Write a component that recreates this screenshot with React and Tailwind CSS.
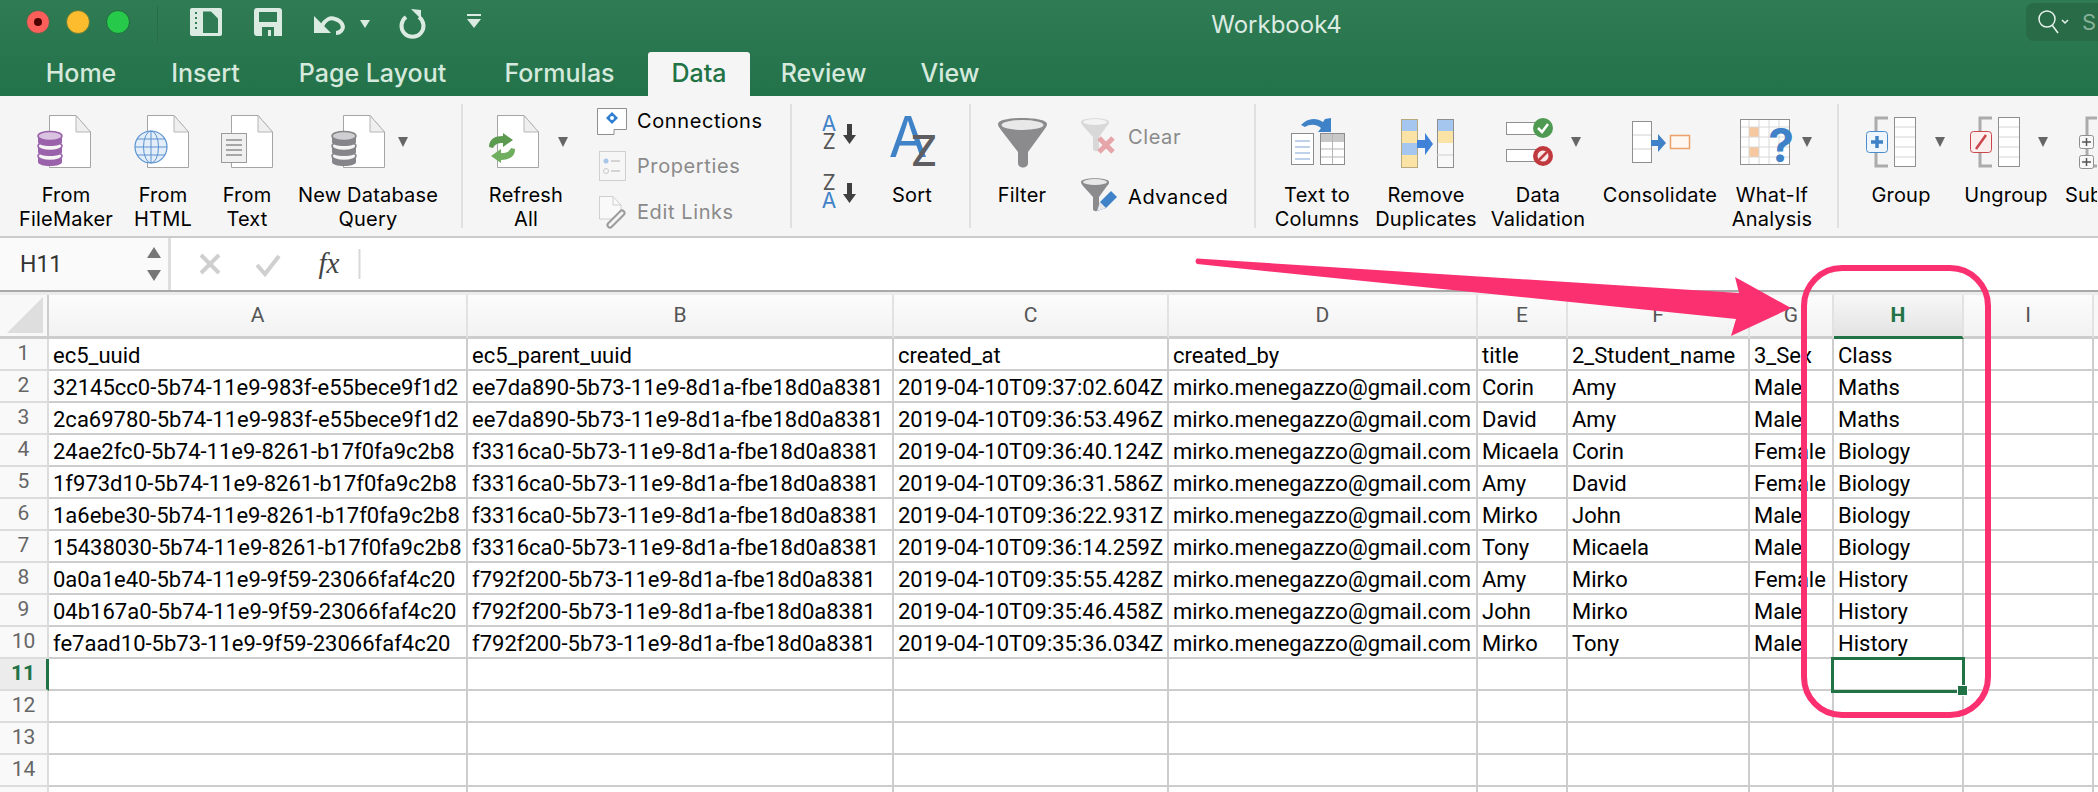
const rows = [
  ['ec5_uuid', 'ec5_parent_uuid', 'created_at', 'created_by', 'title', '2_Student_name', '3_Sex', 'Class'],
  ['32145cc0-5b74-11e9-983f-e55bece9f1d2', 'ee7da890-5b73-11e9-8d1a-fbe18d0a8381', '2019-04-10T09:37:02.604Z', 'mirko.menegazzo@gmail.com', 'Corin', 'Amy', 'Male', 'Maths'],
  ['2ca69780-5b74-11e9-983f-e55bece9f1d2', 'ee7da890-5b73-11e9-8d1a-fbe18d0a8381', '2019-04-10T09:36:53.496Z', 'mirko.menegazzo@gmail.com', 'David', 'Amy', 'Male', 'Maths'],
  ['24ae2fc0-5b74-11e9-8261-b17f0fa9c2b8', 'f3316ca0-5b73-11e9-8d1a-fbe18d0a8381', '2019-04-10T09:36:40.124Z', 'mirko.menegazzo@gmail.com', 'Micaela', 'Corin', 'Female', 'Biology'],
  ['1f973d10-5b74-11e9-8261-b17f0fa9c2b8', 'f3316ca0-5b73-11e9-8d1a-fbe18d0a8381', '2019-04-10T09:36:31.586Z', 'mirko.menegazzo@gmail.com', 'Amy', 'David', 'Female', 'Biology'],
  ['1a6ebe30-5b74-11e9-8261-b17f0fa9c2b8', 'f3316ca0-5b73-11e9-8d1a-fbe18d0a8381', '2019-04-10T09:36:22.931Z', 'mirko.menegazzo@gmail.com', 'Mirko', 'John', 'Male', 'Biology'],
  ['15438030-5b74-11e9-8261-b17f0fa9c2b8', 'f3316ca0-5b73-11e9-8d1a-fbe18d0a8381', '2019-04-10T09:36:14.259Z', 'mirko.menegazzo@gmail.com', 'Tony', 'Micaela', 'Male', 'Biology'],
  ['0a0a1e40-5b74-11e9-9f59-23066faf4c20', 'f792f200-5b73-11e9-8d1a-fbe18d0a8381', '2019-04-10T09:35:55.428Z', 'mirko.menegazzo@gmail.com', 'Amy', 'Mirko', 'Female', 'History'],
  ['04b167a0-5b74-11e9-9f59-23066faf4c20', 'f792f200-5b73-11e9-8d1a-fbe18d0a8381', '2019-04-10T09:35:46.458Z', 'mirko.menegazzo@gmail.com', 'John', 'Mirko', 'Male', 'History'],
  ['fe7aad10-5b73-11e9-9f59-23066faf4c20', 'f792f200-5b73-11e9-8d1a-fbe18d0a8381', '2019-04-10T09:35:36.034Z', 'mirko.menegazzo@gmail.com', 'Mirko', 'Tony', 'Male', 'History'],
]
const columns = ['A', 'B', 'C', 'D', 'E', 'F', 'G', 'H', 'I']
const tabs = [
  ['Home', 'w-[114px] ml-[24px]'],
  ['Insert', 'w-[113px] ml-[11px]'],
  ['Page Layout', 'w-[193px] ml-[14px]'],
  ['Formulas', 'w-[155px] ml-[13px]'],
  ['Data', 'w-[102px] ml-[11px]'],
  ['Review', 'w-[129px] ml-[9px]'],
  ['View', 'w-[100px] ml-[12px]'],
]

function Drop({ x, y = 142 }) {
  return <path d={`M${x - 5} ${y - 5}h10l-5 10z`} fill="#666" />
}

function Page({ x }) {
  return (
    <g>
      <path d={`M${x + .5} 115.5H${x + 27}L${x + 41.5} 132V167.5H${x + .5}Z`} fill="#fff" stroke="#a5a5a5" />
      <path d={`M${x + 27} 115.5V132H${x + 41.5}Z`} fill="#efefef" stroke="#b5b5b5" />
    </g>
  )
}

function Db({ x, color, light }) {
  const w = 24
  return (
    <g>
      {[153, 143, 133].map((y, i) => (
        <g key={y}>
          <path d={`M${x} ${y + 3}v6c0 2.500 5.400 4 12 4s12-1.500 12-4v-6z`} fill={color} />
          <ellipse cx={x + w / 2} cy={y + 3} rx={12} ry={4.500} fill={i === 2 ? light : '#f5f5f5'} stroke={color} strokeWidth="1.500" />
        </g>
      ))}
    </g>
  )
}

function Tool({ x, w, className, lines, children }) {
  return (
    <div className={`flex flex-col items-center shrink-0 ${className}`}>
      <svg width={w} height={68} viewBox={`${x} 108 ${w} 68`} className="overflow-visible shrink-0">{children}</svg>
      <div className="mt-[7px] text-[20px] leading-[24px] text-center whitespace-nowrap text-black tracking-[.01em]">
        {lines.map(l => <div key={l}>{l}</div>)}
      </div>
    </div>
  )
}

function Divider() {
  return <div className="w-[2px] h-[124px] mt-[8px] bg-[#e0e0e0] shrink-0" />
}

function SmallRow({ icon, text, muted }) {
  return (
    <div className="h-[45.5px] flex items-center">
      <svg width="40" height="34" viewBox="0 0 40 34" className="shrink-0">{icon}</svg>
      <span className={`text-[20px] tracking-[.03em] whitespace-nowrap ${muted ? 'text-[#8a8a8a]' : 'text-black'}`}>{text}</span>
    </div>
  )
}

function Ribbon() {
  return (
    <div className="flex h-[140px] bg-[#f5f5f5] font-[Inter,sans-serif] overflow-hidden">
      <div className="flex pt-[12px] pl-[12px] shrink-0 w-[461px]">
        <Tool x={12} w={108} className="w-[108px]" lines={['From', 'FileMaker']}>
          <Page x={49} />
          <Db x={38} color="#9a62ab" light="#d9c3e0" />
        </Tool>
        <Tool x={120} w={86} className="w-[86px]" lines={['From', 'HTML']}>
          <Page x={147} />
          <circle cx="151" cy="147" r="16" fill="#e3eefa" stroke="#5c93cf" strokeWidth="1.200" />
          <ellipse cx="151" cy="147" rx="7.500" ry="16" fill="none" stroke="#5c93cf" />
          <path d="M135 147h32M137 139h28M137 155h28M151 131v32" stroke="#5c93cf" fill="none" />
        </Tool>
        <Tool x={206} w={82} className="w-[82px]" lines={['From', 'Text']}>
          <Page x={231} />
          <rect x="221.500" y="133.500" width="25" height="29" fill="#f0f0f0" stroke="#9a9a9a" />
          <path d="M226 140h16M226 145h16M226 150h16M226 155h16" stroke="#8d8d8d" strokeWidth="1.500" />
        </Tool>
        <Tool x={288} w={160} className="w-[160px]" lines={['New Database', 'Query']}>
          <Page x={343} />
          <Db x={332} color="#86868a" light="#cfcfd2" />
          <Drop x={403} />
        </Tool>
      </div>
      <Divider />
      <div className="flex pt-[12px] shrink-0 w-[126px]">
        <Tool x={463} w={126} className="w-[126px]" lines={['Refresh', 'All']}>
          <Page x={497} />
          <path d="M489 147c0-8 6-11 14-11v-3l10 7-10 7v-4c-5 0-8 1-10 5z" fill="#5b9a4f" />
          <path d="M515 149c0 8-6 11-14 11v3l-10-7 10-7v4c5 0 8-1 10-5z" fill="#6fae5f" />
          <Drop x={563} />
        </Tool>
      </div>
      <div className="flex flex-col pt-[2px] pl-[8px] w-[201px] shrink-0">
        <SmallRow
          text="Connections"
          icon={
            <g>
              <path d="M.5 4.500H29.500V25.500H17V30.500H.5Z" fill="#fff" stroke="#8f8f8f" />
              <path d="M15 8l6 6-6 6-6-6z" fill="#2f7fd0" />
              <circle cx="15" cy="14" r="2" fill="#fff" />
            </g>
          }
        />
        <SmallRow
          text="Properties"
          muted
          icon={
            <g>
              <rect x="2.500" y="2.500" width="26" height="29" fill="#f6f6f6" stroke="#cfcfcf" />
              <circle cx="9" cy="12" r="2.500" fill="#a8c6e8" />
              <circle cx="9" cy="22" r="2.500" fill="none" stroke="#c8c8c8" />
              <path d="M14 12h9M14 22h9" stroke="#c8c8c8" strokeWidth="1.500" />
            </g>
          }
        />
        <SmallRow
          text="Edit Links"
          muted
          icon={
            <g>
              <path d="M2.500 1.500H16L24 10V24H2.500Z" fill="#f9f9f9" stroke="#cfcfcf" />
              <path d="M16 1.500V10H24" fill="none" stroke="#cfcfcf" />
              <path d="M13 30l12-12" stroke="#9c9c9c" strokeWidth="7" strokeLinecap="round" fill="none" />
              <path d="M13 30l12-12" stroke="#f5f5f5" strokeWidth="3" strokeLinecap="round" fill="none" />
            </g>
          }
        />
      </div>
      <Divider />
      <div className="flex shrink-0">
        <svg width="92" height="134" viewBox="793 100 92 134" className="shrink-0">
          <text x="830" y="135" textAnchor="middle" fontSize="21" fontFamily="Inter" fill="#3f82c8">A</text>
          <text x="830" y="153" textAnchor="middle" fontSize="21" fontFamily="Inter" fill="#555">Z</text>
          <path d="M848 128h5v11h4l-6.500 9-6.500-9h4z" fill="#404040" />
          <text x="830" y="194" textAnchor="middle" fontSize="21" fontFamily="Inter" fill="#555">Z</text>
          <text x="830" y="212" textAnchor="middle" fontSize="21" fontFamily="Inter" fill="#3f82c8">A</text>
          <path d="M848 187h5v11h4l-6.500 9-6.500-9h4z" fill="#404040" />
        </svg>
        <div className="pt-[12px]">
          <Tool x={885} w={56} className="w-[56px]" lines={['Sort']}>
            <text x="909" y="157" textAnchor="middle" fontSize="56" fontFamily="Inter" fill="#3f82c8">A</text>
            <text x="925" y="166" textAnchor="middle" fontSize="42" fontWeight="500" fontFamily="Inter" fill="#5e5e62">Z</text>
          </Tool>
        </div>
        <div className="w-[29px]" />
      </div>
      <Divider />
      <div className="flex pt-[12px] shrink-0 w-[102px]">
        <Tool x={972} w={102} className="w-[102px]" lines={['Filter']}>
          <path d="M999 124c0-8 49-8 49 0 0 2-1 3-3 6l-16 22v11c0 6-10 6-10 0v-11l-17-22c-2-3-3-4-3-6z" fill="#8b8b8d" />
          <ellipse cx="1023.500" cy="125" rx="21" ry="5" fill="#e8e8e8" />
        </Tool>
      </div>
      <div className="flex flex-col pt-[11px] pl-[4px] w-[181px] shrink-0">
        <div className="h-[60px] flex items-center">
          <svg width="46" height="40" viewBox="0 0 46 40" className="shrink-0">
            <path d="M4 5c0-5 28-5 28 0 0 1 0 2-2 4l-8 11v12c0 3-6 3-6 0V20L6 9C5 8 4 6 4 5z" fill="#d8d8d8" />
            <ellipse cx="18" cy="5" rx="12" ry="3" fill="#f3f3f3" />
            <path d="M22 21l14 14M36 21L22 35" stroke="#e6a5a8" strokeWidth="5" />
          </svg>
          <span className="ml-[5px] text-[20px] tracking-[.03em] text-[#8a8a8a]">Clear</span>
        </div>
        <div className="h-[60px] flex items-center">
          <svg width="46" height="40" viewBox="0 0 46 40" className="shrink-0">
            <path d="M4 5c0-5 28-5 28 0 0 1 0 2-2 4l-8 11v12c0 3-6 3-6 0V20L6 9C5 8 4 6 4 5z" fill="#8b8b8d" />
            <ellipse cx="18" cy="5" rx="12" ry="3" fill="#e8e8e8" />
            <path d="M20 34l3-9 11-11 6 6-11 11z" fill="#3f82c8" />
            <path d="M20 34l3-9 6 6z" fill="#e9e9e9" />
          </svg>
          <span className="ml-[5px] text-[20px] tracking-[.03em] text-black whitespace-nowrap">Advanced</span>
        </div>
      </div>
      <Divider />
      <div className="flex pt-[12px] shrink-0 w-[581px]">
        <Tool x={1257} w={122} className="w-[122px]" lines={['Text to', 'Columns']}>
          <path d="M1302 125c6-7 15-8 22-3l2-3 6-1v14h-13l3-4c-5-4-11-4-16-1z" fill="#3f82c8" />
          <rect x="1292.500" y="133.500" width="22" height="31" fill="#fff" stroke="#8c8c8c" />
          <path d="M1296 141h15M1296 147h15M1296 153h15M1296 159h15" stroke="#a9c5e4" strokeWidth="1.500" />
          <rect x="1321.500" y="133.500" width="24" height="31" fill="#fff" stroke="#8c8c8c" />
          <rect x="1322" y="134" width="23" height="8" fill="#c8c8c8" />
          <path d="M1333.500 134v30M1322 149h23M1322 157h23" stroke="#b5b5b5" />
        </Tool>
        <Tool x={1379} w={96} className="w-[96px]" lines={['Remove', 'Duplicates']}>
          <rect x="1402" y="119" width="16" height="12" fill="#a5c6ee" />
          <rect x="1402" y="131" width="16" height="12" fill="#fbe3a5" />
          <rect x="1402" y="143" width="16" height="12" fill="#a5c6ee" />
          <rect x="1402" y="155" width="16" height="12" fill="#fbe3a5" />
          <rect x="1402.500" y="119.500" width="16" height="48" fill="none" stroke="#b6a97e" />
          <path d="M1418 140h8v-7l8 11-8 11v-7h-8z" fill="#3f82d8" />
          <rect x="1438" y="119" width="16" height="12" fill="#a5c6ee" />
          <rect x="1438" y="131" width="16" height="12" fill="#fbe3a5" />
          <rect x="1438" y="143" width="16" height="24" fill="#f8f8f8" />
          <rect x="1438.500" y="119.500" width="16" height="48" fill="none" stroke="#8f8f8f" />
          <path d="M1438 155h16" stroke="#cfcfcf" />
        </Tool>
        <Tool x={1475} w={128} className="w-[128px]" lines={['Data', 'Validation']}>
          <rect x="1507.500" y="122.500" width="34" height="12" fill="#fff" stroke="#8f8f8f" />
          <circle cx="1544" cy="128" r="10" fill="#4f9a52" />
          <path d="M1539 128l4 4 6-8" stroke="#fff" strokeWidth="2.500" fill="none" />
          <rect x="1507.500" y="149.500" width="34" height="12" fill="#fff" stroke="#8f8f8f" />
          <circle cx="1544" cy="156" r="10" fill="#c0393f" />
          <circle cx="1544" cy="156" r="5.500" fill="#f8e8e8" />
          <path d="M1540 160l8-8" stroke="#c0393f" strokeWidth="2.500" />
          <Drop x={1577} />
        </Tool>
        <Tool x={1603} w={116} className="w-[116px]" lines={['Consolidate']}>
          <rect x="1633.500" y="121.500" width="19" height="41" fill="#fff" stroke="#8f8f8f" />
          <path d="M1634 135h18M1634 149h18" stroke="#d0d0d0" />
          <path d="M1652 140h7v-6l8 9-8 9v-6h-7z" fill="#3f82c8" />
          <rect x="1671.500" y="135.500" width="19" height="13" fill="#fff8f0" stroke="#eaa26a" strokeWidth="1.500" />
        </Tool>
        <Tool x={1719} w={108} className="w-[108px]" lines={['What-If', 'Analysis']}>
          <rect x="1741.500" y="119.500" width="49" height="45" fill="#fff" stroke="#8f8f8f" />
          <rect x="1750" y="127" width="10" height="10" fill="#f6c8a0" />
          <rect x="1750" y="147" width="10" height="10" fill="#f6c8a0" />
          <path d="M1750 120v44M1760 120v44M1770 120v44M1780 120v44M1742 127h48M1742 137h48M1742 147h48M1742 157h48" stroke="#d8d8d8" fill="none" />
          <text x="1782" y="162" textAnchor="middle" fontSize="46" fontWeight="700" fontFamily="Inter" fill="#3f82c8">?</text>
          <Drop x={1808} />
        </Tool>
        <div className="w-[7px]" />
      </div>
      <Divider />
      <div className="flex pt-[12px] shrink-0">
        <Tool x={1840} w={124} className="w-[124px]" lines={['Group']}>
          <path d="M1889 118h-12v48h12" fill="none" stroke="#ababab" strokeWidth="3" />
          <rect x="1895.500" y="117.500" width="21" height="49" fill="#fff" stroke="#8f8f8f" />
          <path d="M1896 127h20M1896 137h20M1896 147h20M1896 157h20" stroke="#d4d4d4" />
          <rect x="1867.500" y="131.500" width="21" height="21" rx="3" fill="#eef5fc" stroke="#4a8ccc" />
          <path d="M1878 136v12M1872 142h12" stroke="#3f82c8" strokeWidth="3.500" />
          <Drop x={1941} />
        </Tool>
        <Tool x={1964} w={86} className="w-[86px]" lines={['Ungroup']}>
          <path d="M1993 118h-12v48h12" fill="none" stroke="#ababab" strokeWidth="3" />
          <rect x="1999.500" y="117.500" width="21" height="49" fill="#fff" stroke="#8f8f8f" />
          <path d="M2000 127h20M2000 137h20M2000 147h20M2000 157h20" stroke="#d4d4d4" />
          <rect x="1971.500" y="131.500" width="21" height="21" rx="3" fill="#fdeeee" stroke="#c9474c" />
          <path d="M1977 149l10-14" stroke="#c9474c" strokeWidth="2.500" />
          <Drop x={2044} />
        </Tool>
        <div className="w-[48px] pl-[16px] overflow-hidden shrink-0">
          <svg width="32" height="68" viewBox="2066 108 32 68" className="shrink-0">
            <path d="M2098 118h-10v48h10" fill="none" stroke="#ababab" strokeWidth="3" />
            <rect x="2080.500" y="135.500" width="14" height="13" rx="2" fill="#f8f8f8" stroke="#8f8f8f" />
            <path d="M2087.500 138v8M2083 142h9" stroke="#555" strokeWidth="1.500" />
            <rect x="2080.500" y="155.500" width="14" height="13" rx="2" fill="#f8f8f8" stroke="#8f8f8f" />
            <path d="M2087.500 158v8M2083 162h9" stroke="#555" strokeWidth="1.500" />
          </svg>
          <div className="mt-[7px] text-[20px] leading-[24px] whitespace-nowrap text-black tracking-[.01em]">Subtotal</div>
        </div>
      </div>
    </div>
  )
}

function TitleBar() {
  return (
    <div className="h-[96px] bg-linear-to-b from-[#2f7b54] to-[#22724a] font-[Inter,sans-serif]">
      <div className="h-[48px] flex items-start">
        <div className="flex gap-[16px] pl-[26px] pt-[10px] shrink-0">
          <div className="w-[24px] h-[24px] rounded-full bg-[#fc5f5a] border border-[#3d6b4b] flex items-center justify-center">
            <div className="w-[8px] h-[8px] rounded-full bg-[#4d0000]" />
          </div>
          <div className="w-[24px] h-[24px] rounded-full bg-[#fdbc2d] border border-[#5d7a3a]" />
          <div className="w-[24px] h-[24px] rounded-full bg-[#27c94a] border border-[#1f6a3e]" />
        </div>
        <div className="w-[1px] h-[36px] mt-[6px] ml-[27px] bg-[#276c47] shrink-0" />
        <svg width="320" height="48" viewBox="180 0 320 48" className="ml-[22px] shrink-0">
          <rect x="190" y="8" width="32" height="28" rx="2" fill="#dcebe2" />
          <path d="M203 11.500h8l7 7V33h-15z" fill="#2f7b54" />
          <path d="M196 12v2M196 17v2M196 22v2M196 27v2" stroke="#2f7b54" strokeWidth="2" />
          <path d="M254 11a3 3 0 013-3h22a3 3 0 013 3v25h-25a3 3 0 01-3-3z" fill="#dcebe2" />
          <rect x="259" y="12" width="18" height="10" fill="#2f7b54" />
          <rect x="262" y="27" width="12" height="9" fill="#2f7b54" />
          <rect x="268" y="30" width="3" height="6" fill="#dcebe2" />
          <path d="M322 26c3-6 8-9 13-7 7 2 10 8 6 12-1 1-3 2-5 2" fill="none" stroke="#dcebe2" strokeWidth="4" />
          <path d="M314 16v17h17z" fill="#dcebe2" />
          <path d="M360 20h10l-5 8z" fill="#dcebe2" />
          <path d="M406 17a11 11 0 1 0 13 0" fill="none" stroke="#dcebe2" strokeWidth="4" />
          <path d="M411 9l10 1v9z" fill="#dcebe2" />
          <path d="M467 14h14v2h-14zM467 19h14l-7 9z" fill="#dcebe2" />
        </svg>
        <div className="ml-[708px] w-[137px] pt-[10px] text-[24px] leading-[30px] text-[#dcebe2] text-center whitespace-nowrap shrink-0">Workbook4</div>
        <div className="ml-auto w-[72px] h-[38px] mt-[3px] rounded-l-lg bg-[#286b46] flex items-center overflow-hidden shrink-0">
          <svg width="40" height="30" viewBox="0 0 40 30" className="ml-[10px] shrink-0">
            <circle cx="11" cy="12" r="8" fill="none" stroke="#e8f2ec" strokeWidth="1.500" />
            <path d="M16 18l6 8" stroke="#e8f2ec" strokeWidth="1.500" />
            <path d="M26 13l3 3 3-3" fill="none" stroke="#e8f2ec" strokeWidth="1.500" />
          </svg>
          <span className="ml-[6px] text-[22px] text-[#86b097]">S</span>
        </div>
      </div>
      <div className="h-[48px] flex items-end">
        {tabs.map(([name, cls]) => (
          <div
            key={name}
            className={`h-[44px] flex items-center justify-center text-[25px] font-medium whitespace-nowrap shrink-0 ${cls} ${name === 'Data' ? 'bg-[#f5f5f5] text-[#217346] rounded-t-[3px]' : 'text-[#d6e9dd]'}`}
          >
            {name}
          </div>
        ))}
      </div>
    </div>
  )
}

function FormulaBar() {
  return (
    <div className="h-[56px] flex border-t-2 border-b-2 border-t-[#cbcbcb] border-b-[#a9a9a9] bg-white">
      <div className="w-[168px] bg-[#fafafa] flex items-center justify-between pl-[20px] pr-[7px] shrink-0 font-[Roboto,sans-serif] text-[23px] text-[#333]">
        <span className="pt-[3px]">H11</span>
        <svg width="14" height="34" viewBox="0 0 14 34">
          <path d="M7 0l7 11H0zM0 23h14l-7 11z" fill="#777" />
        </svg>
      </div>
      <div className="w-[3px] bg-[#dedede] shrink-0" />
      <svg width="190" height="52" viewBox="172 0 190 52" className="shrink-0">
        <path d="M202 17l18 18M220 17l-18 18" stroke="#cfcfcf" strokeWidth="4" />
        <path d="M258 27l8 9 14-18" stroke="#cfcfcf" strokeWidth="4" fill="none" />
        <text x="330" y="35" textAnchor="middle" fontSize="29" fontStyle="italic" fontFamily="Liberation Serif" fill="#444">fx</text>
        <path d="M360.500 11v30" stroke="#d8d8d8" strokeWidth="2" />
      </svg>
    </div>
  )
}

function Sheet() {
  const cell = 'border-r-2 border-b-2 border-[#cdcdcd] pl-[4px] text-[22px] leading-[33px] whitespace-nowrap text-black'
  return (
    <div className="grid grid-cols-[49px_419px_426px_275px_309px_90px_182px_84px_130px_130px_1fr] grid-rows-[44px] auto-rows-[32px] font-[Roboto,sans-serif]">
      <div className="border-r-2 border-b-[3px] border-[#cdcdcd] bg-[#f8f8f8] flex items-end justify-end pr-[4px] pb-[3px]">
        <svg width="36" height="36" viewBox="0 0 36 36"><path d="M0 36L36 0v36z" fill="#dedede" /></svg>
      </div>
      {columns.map(c => (
        <div
          key={c}
          className={`flex items-center justify-center text-[21px] border-r-2 ${c === 'H' ? 'bg-linear-to-b from-[#f7f7f7] to-[#e3e3e3] text-[#217346] font-bold border-b-[3px] border-b-[#217346] border-r-[#e2e2e2]' : 'bg-linear-to-b from-[#fcfcfc] to-[#f2f2f2] text-[#555] border-b-[3px] border-[#e2e2e2] border-b-[#cdcdcd]'}`}
        >
          {c}
        </div>
      ))}
      <div className="border-b-[3px] border-[#cdcdcd] bg-[#f8f8f8]" />
      {Array.from({ length: 15 }, (_, r) => (
        <Row key={r} r={r} cell={cell} />
      ))}
    </div>
  )
}

function Row({ r, cell }) {
  const data = rows[r] || []
  const active = r === 10
  return (
    <>
      <div className={`flex items-center justify-center text-[21px] border-b-2 ${active ? 'bg-[#ececec] text-[#217346] font-bold border-r-[3px] border-r-[#217346] border-b-[#dcdcdc]' : 'bg-[#f9f9f9] text-[#666] border-r-2 border-[#dcdcdc]'}`}>
        {r < 14 ? r + 1 : ''}
      </div>
      {Array.from({ length: 10 }, (_, c) => (
        <div key={c} className={`${cell} ${c === 7 && active ? 'relative' : ''}`}>
          {data[c] || ''}
          {c === 7 && active && (
            <div className="absolute -left-[3px] -top-[2px] w-[134px] h-[36px] border-[3px] border-[#217346]">
              <div className="absolute -right-[6px] -bottom-[6px] w-[11px] h-[11px] bg-[#217346] border border-white" />
            </div>
          )}
        </div>
      ))}
    </>
  )
}

export default function App() {
  return (
    <div className="relative w-[2098px] h-[792px] overflow-hidden bg-white">
      <TitleBar />
      <Ribbon />
      <FormulaBar />
      <div className="h-[3px] bg-[#ececec]" />
      <Sheet />
      {/* annotation drawn over the sheet */}
      <svg width="2098" height="792" viewBox="0 0 2098 792" className="absolute left-0 top-0 pointer-events-none">
        <path d="M1197 258.500L1739 293L1735 277L1791 308L1731 336L1736 319L1197 264Q1194 261 1197 258.500Z" fill="#fb3070" />
        <rect x="1804" y="268" width="184" height="447" rx="38" fill="none" stroke="#fb3070" strokeWidth="6" />
      </svg>
    </div>
  )
}
